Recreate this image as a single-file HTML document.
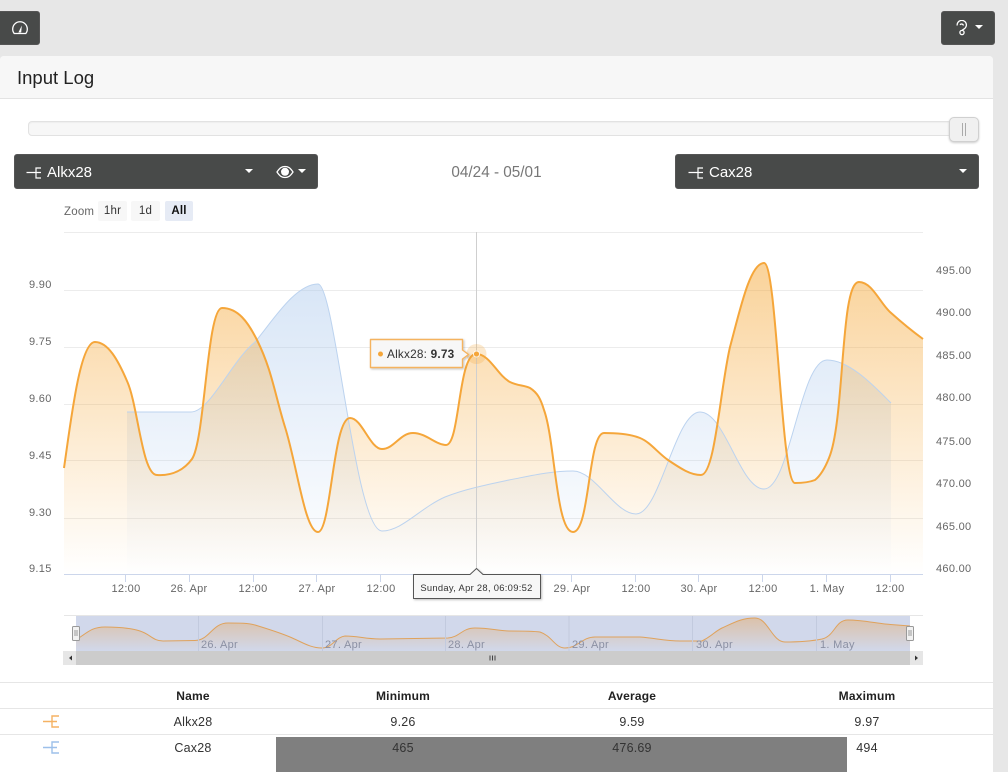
<!DOCTYPE html>
<html><head><meta charset="utf-8"><title>Input Log</title>
<style>
html,body{margin:0;padding:0;width:1008px;height:772px;overflow:hidden;background:#e7e7e7;font-family:"Liberation Sans",sans-serif;color:#333}
.a{position:absolute}
.btn{position:absolute;background:#484a49;border-radius:3px;border:1px solid #555;box-sizing:border-box;color:#fff}
.lbl{position:absolute;font-size:15px;color:#fff;line-height:20px}
.car{position:absolute;border-left:4px solid transparent;border-right:4px solid transparent;border-top:4.500px solid #fff;width:0;height:0}
.zb{position:absolute;top:201px;height:20px;line-height:20px;width:29px;text-align:center;font-size:11.500px;background:#f7f7f7;color:#333;border-radius:2px;letter-spacing:.2px}
.th,.td{position:absolute;font-size:12px;line-height:14px;transform:translateX(-50%);white-space:nowrap;letter-spacing:.2px}
.th{font-weight:bold;color:#222}.td{font-size:12.500px;color:#333}
.hr{position:absolute;left:0;width:993px;height:1px;background:#e6e6e6}
svg text{font-family:"Liberation Sans",sans-serif}
</style></head><body>
<div class="a" style="left:0;top:56px;width:993px;height:716px;background:#fff;border-radius:4px 4px 0 0"></div>
<div class="a" style="left:0;top:56px;width:993px;height:42px;background:#f7f7f7;border-bottom:1px solid #e3e3e3;border-radius:4px 4px 0 0"></div>
<div class="a" style="left:17px;top:67px;font-size:18.500px;line-height:22px;color:#222">Input Log</div>

<div class="btn" style="left:-3px;top:11px;width:43px;height:34px">
<svg class="a" style="left:13px;top:8px" width="18" height="16" viewBox="0 0 18 16" fill="none" stroke="#fff" stroke-width="1.300"><path d="M3.200 13.500A7.300 7.300 0 1 1 14.800 13.500Z" stroke-linejoin="round"/><path d="M7.400 12.500L10.800 5.500L10.200 12.500Z" fill="#fff" stroke="none"/></svg></div>
<div class="btn" style="left:941px;top:11px;width:54px;height:34px"></div>
<svg class="a" style="left:955px;top:20px" width="14" height="16" viewBox="0 0 14 16" fill="none" stroke="#fff" stroke-width="1.300"><path d="M2.200 5.500A4.600 4.600 0 1 1 9.300 8.800C8 9.500 7.200 9.800 7.200 10.800"/><path d="M5 4.800A2 2 0 0 1 8.500 5.500"/><circle cx="7" cy="12.500" r="2.100"/></svg>
<div class="car" style="left:975px;top:25px"></div>

<div class="a" style="left:28px;top:121px;width:930px;height:15px;box-sizing:border-box;background:#f7f7f7;border:1px solid #e2e2e2;border-radius:4px;box-shadow:inset 0 1px 1px #eee"></div>
<div class="a" style="left:949px;top:117px;width:30px;height:25px;box-sizing:border-box;background:#f0f0f0;border:1px solid #d0d0d0;border-radius:5px;box-shadow:0 1px 2px #ccc"></div>
<div class="a" style="left:962px;top:123px;width:1px;height:13px;background:#aaa"></div>
<div class="a" style="left:965px;top:123px;width:1px;height:13px;background:#aaa"></div>

<div class="btn" style="left:14px;top:154px;width:304px;height:35px"></div>
<svg class="a" style="left:26px;top:167px" width="16" height="12" viewBox="0 0 16 12" fill="none" stroke="#fff" stroke-width="1.200"><path d="M0.500 5.500H15M15 1H10V11H15"/></svg>
<div class="lbl" style="left:47px;top:163px">Alkx28</div>
<div class="car" style="left:245px;top:169px"></div>
<svg class="a" style="left:276px;top:165px" width="18" height="14" viewBox="0 0 18 14"><path d="M1 7C4 2.500 6 1.500 9 1.500S14 2.500 17 7C14 11.500 12 12.500 9 12.500S4 11.500 1 7Z" fill="none" stroke="#fff" stroke-width="1.300"/><circle cx="9" cy="6.800" r="4" fill="#fff"/></svg>
<div class="car" style="left:298px;top:169px"></div>

<div class="a" style="left:396px;top:164px;width:201px;text-align:center;font-size:15.300px;line-height:18px;color:#777">04/24 - 05/01</div>

<div class="btn" style="left:675px;top:154px;width:304px;height:35px"></div>
<svg class="a" style="left:688px;top:167px" width="16" height="12" viewBox="0 0 16 12" fill="none" stroke="#fff" stroke-width="1.200"><path d="M0.500 5.500H15M15 1H10V11H15"/></svg>
<div class="lbl" style="left:709px;top:163px">Cax28</div>
<div class="car" style="left:959px;top:169px"></div>

<div class="a" style="left:64px;top:205px;font-size:11.500px;line-height:14px;color:#666;letter-spacing:.2px">Zoom</div>
<div class="zb" style="left:98px">1hr</div><div class="zb" style="left:131px">1d</div>
<div class="zb" style="left:165px;width:28px;background:#e6ebf5;font-weight:bold;color:#111">All</div>

<svg class="a" style="left:0;top:0" width="1008" height="772" viewBox="0 0 1008 772">
<defs>
<linearGradient id="go" gradientUnits="userSpaceOnUse" x1="0" y1="263" x2="0" y2="574"><stop offset="0" stop-color="#f5a93b" stop-opacity=".52"/><stop offset="1" stop-color="#f5a93b" stop-opacity="0"/></linearGradient>
<linearGradient id="gb" gradientUnits="userSpaceOnUse" x1="0" y1="284" x2="0" y2="574"><stop offset="0" stop-color="#a9c7ec" stop-opacity=".45"/><stop offset="1" stop-color="#a9c7ec" stop-opacity="0"/></linearGradient>
<linearGradient id="gn" x1="0" y1="0" x2="0" y2="1"><stop offset="0" stop-color="#e8a55a" stop-opacity=".45"/><stop offset="1" stop-color="#e8a55a" stop-opacity="0"/></linearGradient>
<filter id="sh" x="-10%" y="-20%" width="120%" height="150%"><feDropShadow dx="1" dy="1" stdDeviation="1" flood-color="#000" flood-opacity=".25"/></filter>
</defs>
<g stroke="#ececec" stroke-width="1"><path d="M64 232.500H923M64 290.500H923M64 347.500H923M64 404.500H923M64 460.500H923M64 518.500H923"/></g>
<path d="M127,412 L191,412 C210,412 232,360 255,342 C272,322 295,284 318,284 C335,284 355,531 382,531 C402,531 420,508 445,497 C465,489 490,484 509,480 C530,476 550,471 573,471 C595,471 615,514 636,514 C660,514 675,412 700,412 C725,412 740,489 764,489 C790,489 800,360 827,360 C850,360 875,387 891,403 L891,574 L127,574Z" fill="url(#gb)"/>
<path d="M64,468 C71,420 80,342 95,342 C108,342 118,360 127,381 C138,405 142,475 157,475 C172,476 184,470 192,459 C205,440 207,308 222,308 C238,308 248,322 257,340 C272,370 275,395 285,427 C297,465 305,532 318,532 C331,532 333,418 350,418 C362,418 370,449 382,449 C394,449 400,433 413,433 C426,433 436,445 446,445 C460,445 458,354 476,354 C490,354 497,375 510,382 C518,386 524,385 530,388 C538,393 541,400 544,410 C555,440 556,532 573,532 C590,532 588,433 604,433 C618,433 630,434 640,438 C650,442 658,453 668,460 C680,468 690,475 701,475 C715,475 720,390 730,347 C740,310 750,263 764,263 C777,263 781,483 795,483 C805,483 810,482 815,480 C820,476 825,468 829,458 C845,420 840,282 859,282 C872,282 880,303 890,312 C900,321 912,331 923,339 L923,574 L64,574Z" fill="url(#go)"/>
<path d="M127,412 L191,412 C210,412 232,360 255,342 C272,322 295,284 318,284 C335,284 355,531 382,531 C402,531 420,508 445,497 C465,489 490,484 509,480 C530,476 550,471 573,471 C595,471 615,514 636,514 C660,514 675,412 700,412 C725,412 740,489 764,489 C790,489 800,360 827,360 C850,360 875,387 891,403" fill="none" stroke="#bcd3ef" stroke-width="1"/>
<path d="M64,468 C71,420 80,342 95,342 C108,342 118,360 127,381 C138,405 142,475 157,475 C172,476 184,470 192,459 C205,440 207,308 222,308 C238,308 248,322 257,340 C272,370 275,395 285,427 C297,465 305,532 318,532 C331,532 333,418 350,418 C362,418 370,449 382,449 C394,449 400,433 413,433 C426,433 436,445 446,445 C460,445 458,354 476,354 C490,354 497,375 510,382 C518,386 524,385 530,388 C538,393 541,400 544,410 C555,440 556,532 573,532 C590,532 588,433 604,433 C618,433 630,434 640,438 C650,442 658,453 668,460 C680,468 690,475 701,475 C715,475 720,390 730,347 C740,310 750,263 764,263 C777,263 781,483 795,483 C805,483 810,482 815,480 C820,476 825,468 829,458 C845,420 840,282 859,282 C872,282 880,303 890,312 C900,321 912,331 923,339" fill="none" stroke="#f5a63a" stroke-width="2"/>
<path d="M476.500 232V574" stroke="#cfcfcf" stroke-width="1"/>
<path d="M64 574.500H923" stroke="#ccd6eb"/>
<path d="M125.500 574v8M189.500 574v8M253.500 574v8M316.500 574v8M380.500 574v8M444.500 574v8M508.500 574v8M571.500 574v8M635.500 574v8M698.500 574v8M762.500 574v8M826.500 574v8M890.500 574v8" stroke="#ccd6eb"/>
<circle cx="476.500" cy="354" r="10" fill="#f5a93b" fill-opacity=".25"/><circle cx="476.500" cy="354" r="3" fill="#f5a63a" stroke="#fff" stroke-width=".8"/>

<g font-size="11" fill="#666" letter-spacing=".3">
<text x="29" y="288">9.90</text><text x="29" y="345">9.75</text><text x="29" y="402">9.60</text><text x="29" y="459">9.45</text><text x="29" y="516">9.30</text><text x="29" y="572">9.15</text>
<text x="936" y="274">495.00</text><text x="936" y="316">490.00</text><text x="936" y="359">485.00</text><text x="936" y="401">480.00</text><text x="936" y="445">475.00</text><text x="936" y="487">470.00</text><text x="936" y="530">465.00</text><text x="936" y="572">460.00</text>
</g>
<g font-size="11" fill="#666" letter-spacing=".3" text-anchor="middle">
<text x="126" y="592">12:00</text><text x="189" y="592">26. Apr</text><text x="253" y="592">12:00</text><text x="317" y="592">27. Apr</text><text x="381" y="592">12:00</text><text x="572" y="592">29. Apr</text><text x="636" y="592">12:00</text><text x="699" y="592">30. Apr</text><text x="763" y="592">12:00</text><text x="827" y="592">1. May</text><text x="890" y="592">12:00</text>
</g>

<path d="M64 615.500H923" stroke="#e6e6e6"/>
<rect x="76" y="616" width="834" height="35" fill="#d1d8eb"/>
<path d="M76,640 C88,632 92,627 105,627 C118,627 130,628 140,631 C150,634 153,641 163,641 L195,640.500 C210,640 212,623 228,623 C240,623 248,623 255,625 C268,629 278,632 290,637 C302,642 310,648 322,648 C332,648 336,637 345,636 C358,636 365,639 380,639 L448,638 C460,637 462,628 475,628 C490,628 500,631 510,631 C525,631 532,631 540,632 C552,636 555,648 565,648 C578,648 582,637 595,637 L640,637 C655,638 665,641 680,641 L702,641 C712,636 714,632 722,628 C735,622 742,618 755,618 C768,618 772,642 785,642 C800,642 812,641 822,639 C835,636 835,620 848,620 C862,620 875,623 885,624 L910,626 L910,651 L76,651Z" fill="url(#gn)"/>
<path d="M76,640 C88,632 92,627 105,627 C118,627 130,628 140,631 C150,634 153,641 163,641 L195,640.500 C210,640 212,623 228,623 C240,623 248,623 255,625 C268,629 278,632 290,637 C302,642 310,648 322,648 C332,648 336,637 345,636 C358,636 365,639 380,639 L448,638 C460,637 462,628 475,628 C490,628 500,631 510,631 C525,631 532,631 540,632 C552,636 555,648 565,648 C578,648 582,637 595,637 L640,637 C655,638 665,641 680,641 L702,641 C712,636 714,632 722,628 C735,622 742,618 755,618 C768,618 772,642 785,642 C800,642 812,641 822,639 C835,636 835,620 848,620 C862,620 875,623 885,624 L910,626" fill="none" stroke="#dfa25c" stroke-width="1"/>
<path d="M198.500 616v35M322.500 616v35M445.500 616v35M569 616v35M692.500 616v35M816.500 616v35" stroke="#c2cade" stroke-width="1"/>
<g font-size="11" fill="#8b90a3" letter-spacing=".3"><text x="201" y="648">26. Apr</text><text x="325" y="648">27. Apr</text><text x="448" y="648">28. Apr</text><text x="572" y="648">29. Apr</text><text x="696" y="648">30. Apr</text><text x="820" y="648">1. May</text></g>
<rect x="63" y="651" width="860" height="14" fill="#ccc"/>
<rect x="63" y="651" width="13" height="14" fill="#e6e6e6"/><rect x="910" y="651" width="13" height="14" fill="#e6e6e6"/>
<path d="M72 655.500v5l-3-2.500zM915 655.500v5l3-2.500z" fill="#333"/>
<path d="M490 655.500v5M492.500 655.500v5M495 655.500v5" stroke="#444"/>
<g fill="#f2f2f2" stroke="#999"><rect x="72.500" y="626.500" width="7" height="14" rx="1"/><rect x="906.500" y="626.500" width="7" height="14" rx="1"/></g>
<path d="M75 630v6M77 630v6M909 630v6M911 630v6" stroke="#999"/>

<path d="M370.500 339.500H462.500V350L468.500 354.500L462.500 359V367.500H370.500Z" fill="#f7f7f7" stroke="#f5b35f" stroke-width="1.400" stroke-linejoin="round" filter="url(#sh)"/>
<circle cx="380.500" cy="354" r="2.500" fill="#f5a63a"/>
<text x="387" y="358" font-size="11.800" fill="#333" letter-spacing=".2">Alkx28: <tspan font-weight="bold">9.73</tspan></text>

<path d="M413.500 574.500H470L476.500 568.500L483 574.500H540.500V598.500H413.500Z" fill="#f7f7f7" stroke="#555" stroke-width="1" stroke-linejoin="round" filter="url(#sh)"/>
<text x="476.500" y="591" font-size="9.400" fill="#333" text-anchor="middle" letter-spacing=".3">Sunday, Apr 28, 06:09:52</text>

<g fill="none" stroke="#f5b263" stroke-width="1.400"><path d="M43 721.500H57M59 716H52V727H59"/></g>
<g fill="none" stroke="#9dc0ea" stroke-width="1.400"><path d="M43 747.500H57M59 742H52V753H59"/></g>
</svg>

<div class="hr" style="top:682px"></div><div class="hr" style="top:708px"></div><div class="hr" style="top:734px"></div>
<div class="a" style="left:276px;top:737px;width:571px;height:35px;background:#7f7f7f"></div>
<div class="th" style="left:193px;top:689px">Name</div><div class="th" style="left:403px;top:689px">Minimum</div><div class="th" style="left:632px;top:689px">Average</div><div class="th" style="left:867px;top:689px">Maximum</div>
<div class="td" style="left:193px;top:715px">Alkx28</div><div class="td" style="left:403px;top:715px">9.26</div><div class="td" style="left:632px;top:715px">9.59</div><div class="td" style="left:867px;top:715px">9.97</div>
<div class="td" style="left:193px;top:741px">Cax28</div><div class="td" style="left:403px;top:741px">465</div><div class="td" style="left:632px;top:741px">476.69</div><div class="td" style="left:867px;top:741px">494</div>
</body></html>
